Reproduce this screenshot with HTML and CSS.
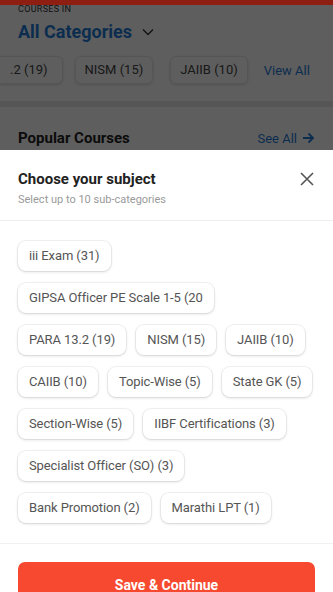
FILE: index.html
```html
<!DOCTYPE html>
<html>
<head>
<meta charset="utf-8">
<link rel="stylesheet" href="styles.css">
</head>
<body>
<div class="screen">
  <div class="behind">
    <div class="topbar"></div>
    <div class="bg-content">
      <div class="label">COURSES IN</div>
      <div class="cat">All Categories
        <svg class="chev" width="12" height="8" viewBox="0 0 12 8"><path d="M1 1.5l5 5 5-5" fill="none" stroke="#fff" stroke-width="1.4"/></svg>
      </div>
      <div class="bg-chips">
        <span class="bg-chip first">.2 (19)</span>
        <span class="bg-chip second">NISM (15)</span>
        <span class="bg-chip third">JAIIB (10)</span>
        <span class="viewall">View All</span>
      </div>
      <div class="band"></div>
      <div class="popular">
        <span class="pop-title">Popular Courses</span>
        <span class="seeall">See All
          <svg width="13" height="12" viewBox="0 0 13 12"><path d="M1 6h10M6.5 1.5L11 6l-4.5 4.5" fill="none" stroke="#1f7ad6" stroke-width="1.8"/></svg>
        </span>
      </div>
    </div>
    <div class="overlay"></div>
  </div>
  <div class="sheet">
    <div class="sheet-head">
      <div class="titles">
        <div class="title">Choose your subject</div>
        <div class="subtitle">Select up to 10 sub-categories</div>
      </div>
      <svg class="close" width="14" height="14" viewBox="0 0 14 14"><path d="M1 1l12 12M13 1L1 13" fill="none" stroke="#555" stroke-width="1.6"/></svg>
    </div>
    <div class="chips">
      <div class="row"><span class="chip">iii Exam (31)</span></div>
      <div class="row"><span class="chip">GIPSA Officer PE Scale 1-5 (20</span></div>
      <div class="row"><span class="chip">PARA 13.2 (19)</span><span class="chip">NISM (15)</span><span class="chip">JAIIB (10)</span></div>
      <div class="row"><span class="chip">CAIIB (10)</span><span class="chip">Topic-Wise (5)</span><span class="chip">State GK (5)</span></div>
      <div class="row"><span class="chip">Section-Wise (5)</span><span class="chip">IIBF Certifications (3)</span></div>
      <div class="row"><span class="chip">Specialist Officer (SO) (3)</span></div>
      <div class="row"><span class="chip">Bank Promotion (2)</span><span class="chip">Marathi LPT (1)</span></div>
    </div>
    <div class="footer">
      <button class="save">Save &amp; Continue</button>
    </div>
  </div>
</div>
</body>
</html>
```
FILE: styles.css
```css
* { box-sizing: border-box; }
html, body { margin: 0; padding: 0; }
body {
  width: 333px;
  height: 592px;
  overflow: hidden;
  font-family: Roboto, "Noto Sans", Arial, sans-serif;
  background: #fff;
}
.screen { width: 333px; height: 592px; overflow: hidden; display: flex; flex-direction: column; }
.behind { position: relative; height: 150px; flex: none; overflow: hidden; background: #fff; }
.topbar { position: absolute; left: 0; top: 0; width: 333px; height: 5px; background: #8e1d12; z-index: 2; }
.bg-content { padding: 0 18px; }
.label { font-size: 9px; color: #333; letter-spacing: 0.3px; line-height: 10px; padding-top: 4px; }
.cat { margin-top: 7px; font-size: 18px; font-weight: 700; color: #1f7ad6; display: flex; align-items: center; gap: 10px; line-height: 22px; }
.chev path { stroke: #333; }
.bg-chips { display: flex; align-items: center; margin-top: 13px; margin-left: -18px; height: 28px; white-space: nowrap; }
.bg-chip { font-size: 13px; color: #444; border: 1px solid #e6e6e6; border-radius: 6px; padding: 0 9px; line-height: 26px; box-shadow: 0 1px 3px rgba(0,0,0,0.15); white-space: nowrap; flex: none; }
.bg-chip.first { border-left: none; border-radius: 0 6px 6px 0; padding-left: 10px; padding-right: 14px; }
.bg-chip.second { margin-left: 12px; }
.bg-chip.third { margin-left: 17px; }
.viewall { font-size: 13px; color: #1f7ad6; white-space: nowrap; margin-left: 16px; }
.band { height: 6px; background: #e8e8e8; margin: 17px -18px 0; }
.popular { display: flex; justify-content: space-between; align-items: center; margin-top: 22px; }
.pop-title { font-size: 15px; font-weight: 700; color: #222; }
.seeall { font-size: 13px; color: #1f7ad6; display: flex; align-items: center; gap: 5px; }
.overlay { position: absolute; inset: 0; background: rgba(0,0,0,0.63); z-index: 1; }

.sheet { flex: 1; background: #fff; display: flex; flex-direction: column; }
.sheet-head { display: flex; justify-content: space-between; align-items: flex-start; padding: 20px 19px 0 18px; height: 71px; border-bottom: 1px solid #eeeeee; }
.title { font-size: 15px; font-weight: 700; color: #222; line-height: 18px; }
.subtitle { font-size: 11px; color: #9a9a9a; margin-top: 5px; line-height: 14px; }
.close { margin-top: 2px; }
.chips { display: flex; flex-direction: column; gap: 12px; padding: 20px 18px 0; width: 333px; height: 323px; border-bottom: 1px solid #f0f0f0; }
.row { display: flex; gap: 10px; }
.chip { font-size: 13px; letter-spacing: -0.1px; color: #555; background: #fff; border-radius: 8px; padding: 0 11px; height: 30px; line-height: 30px; white-space: nowrap; flex: none; box-shadow: 0 1px 3px rgba(0,0,0,0.14), 0 0 0 1px #f3f3f3; }
.footer { padding: 18px 18px 0; }
.save { width: 297px; height: 46px; border: none; border-radius: 7px; background: #f7492f; color: #fff; font-family: Roboto, Arial, sans-serif; font-size: 14px; font-weight: 700; padding: 0; }
```
